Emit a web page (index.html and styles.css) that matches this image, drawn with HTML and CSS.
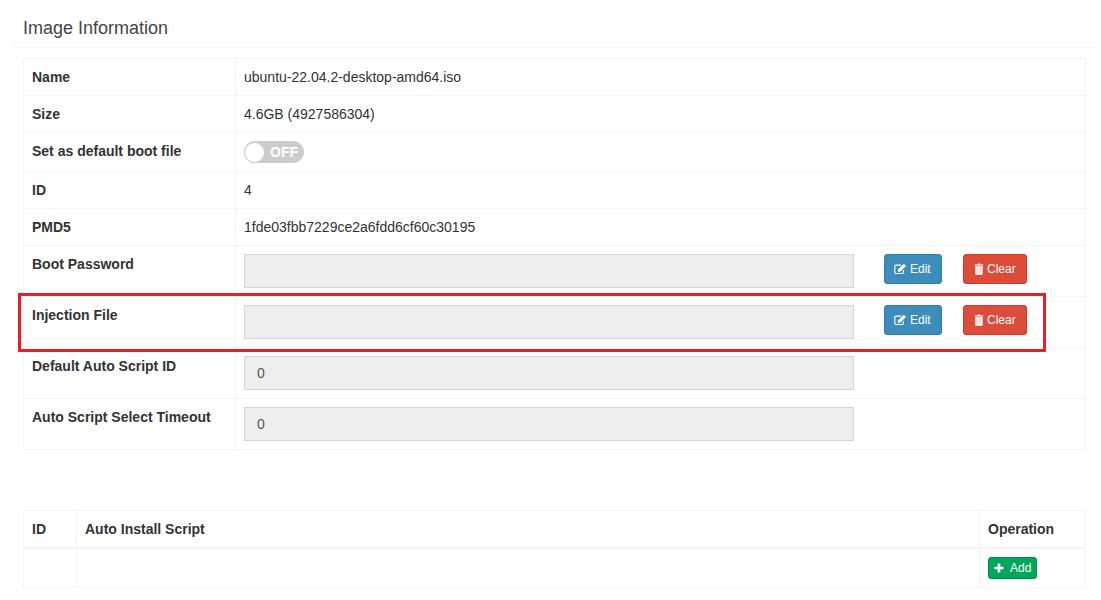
FILE: index.html
```html
<!DOCTYPE html>
<html lang="en">
<head>
<meta charset="utf-8">
<title>Image Information</title>
<link rel="stylesheet" href="styles.css">
</head>
<body>
<div class="box">
  <div class="box-header"><h3 class="box-title">Image Information</h3></div>
  <div class="box-body">
    <table class="table info">
      <colgroup><col class="c-label"><col></colgroup>
      <tbody>
        <tr><th>Name</th><td>ubuntu-22.04.2-desktop-amd64.iso</td></tr>
        <tr><th>Size</th><td>4.6GB (4927586304)</td></tr>
        <tr class="toggle-row"><th>Set as default boot file</th><td><span class="switch"><span class="knob"></span><span class="switch-text">OFF</span></span></td></tr>
        <tr><th>ID</th><td>4</td></tr>
        <tr><th>PMD5</th><td>1fde03fbb7229ce2a6fdd6cf60c30195</td></tr>
        <tr class="field-row"><th>Boot Password</th><td><div class="field-line"><input class="field" type="text" disabled>
          <button class="btn blue" type="button"><svg class="ico" viewBox="0 0 16 14"><path d="M11.5 8.2V11a1.6 1.6 0 0 1-1.6 1.6H2.6A1.6 1.6 0 0 1 1 11V3.8a1.6 1.6 0 0 1 1.6-1.6h6.2" fill="none" stroke="currentColor" stroke-width="1.4"/><path d="M5.2 7.4 12.2.6l2.6 2.6-7 6.9-3 .5z" fill="currentColor"/></svg>Edit</button>
          <button class="btn red" type="button"><svg class="ico trash" viewBox="0 0 12 14"><path d="M4 1.6 4.7.4h2.6L8 1.6h3.3v1.2H.7V1.6zM1.5 3.6h9v9.1c0 .7-.5 1.2-1.1 1.2H2.6c-.6 0-1.1-.5-1.1-1.2z" fill="currentColor"/><path d="M3.7 5v7M6 5v7M8.3 5v7" stroke="#eea59c" stroke-width=".8"/></svg>Clear</button></div></td></tr>
        <tr class="field-row"><th>Injection File</th><td><div class="field-line"><input class="field" type="text" disabled>
          <button class="btn blue" type="button"><svg class="ico" viewBox="0 0 16 14"><path d="M11.5 8.2V11a1.6 1.6 0 0 1-1.6 1.6H2.6A1.6 1.6 0 0 1 1 11V3.8a1.6 1.6 0 0 1 1.6-1.6h6.2" fill="none" stroke="currentColor" stroke-width="1.4"/><path d="M5.2 7.4 12.2.6l2.6 2.6-7 6.9-3 .5z" fill="currentColor"/></svg>Edit</button>
          <button class="btn red" type="button"><svg class="ico trash" viewBox="0 0 12 14"><path d="M4 1.6 4.7.4h2.6L8 1.6h3.3v1.2H.7V1.6zM1.5 3.6h9v9.1c0 .7-.5 1.2-1.1 1.2H2.6c-.6 0-1.1-.5-1.1-1.2z" fill="currentColor"/><path d="M3.7 5v7M6 5v7M8.3 5v7" stroke="#eea59c" stroke-width=".8"/></svg>Clear</button></div></td></tr>
        <tr class="field-row"><th>Default Auto Script ID</th><td><input class="field" type="text" value="0" disabled></td></tr>
        <tr class="field-row"><th>Auto Script Select Timeout</th><td><input class="field" type="text" value="0" disabled></td></tr>
      </tbody>
    </table>
    <table class="table scripts">
      <colgroup><col class="c-id"><col><col class="c-op"></colgroup>
      <thead><tr><th>ID</th><th>Auto Install Script</th><th>Operation</th></tr></thead>
      <tbody><tr><td></td><td></td><td><button class="btn green" type="button"><svg class="ico plus" viewBox="0 0 12 12"><path d="M4.4.6h3.2v3.8h3.8v3.2H7.6v3.8H4.4V7.6H.6V4.4h3.8z" fill="currentColor"/></svg>Add</button></td></tr></tbody>
    </table>
  </div>
</div>
<div class="highlight"></div>
</body>
</html>
```
FILE: styles.css
```css
* { box-sizing: border-box; }
html, body { margin: 0; padding: 0; background: #fff; }
body {
  height: 600px;
  overflow: hidden;
  position: relative;
  font-family: "Liberation Sans", Arial, sans-serif;
  font-size: 14px;
  line-height: 20px;
  color: #333;
}
.box { margin: 0 5px 0 13px; }
.box-header {
  height: 48px;
  padding: 18px 10px 0;
  border-bottom: 1px solid #f4f4f4;
}
.box-title { margin: 0; font-size: 18px; font-weight: 400; line-height: 20px; color: #444; }
.box-body { padding: 10px 10px 0; }
.table { width: 1063px; border-collapse: collapse; table-layout: fixed; }
.table th, .table td {
  border: 1px solid #f4f4f4;
  padding: 8px;
  text-align: left;
  vertical-align: top;
  height: 37px;
}
.table th { font-weight: 700; }
.c-label { width: 212px; }
.c-id { width: 53px; }
.c-op { width: 106px; }
.info tr.toggle-row th, .info tr.toggle-row td { height: 39px; }
.info tr.field-row th, .info tr.field-row td { height: 51px; }
.field-line { display: flex; align-items: flex-start; }
.field {
  display: block;
  width: 610px;
  height: 34px;
  padding: 6px 12px;
  border: 1px solid #d2d6de;
  background: #eee;
  color: #555;
  font: inherit;
  margin: 0;
  border-radius: 0;
}
.btn {
  display: inline-flex;
  align-items: center;
  justify-content: flex-start;
  border: 1px solid transparent;
  border-radius: 3px;
  color: #fff;
  font: 12px/18px "Liberation Sans", Arial, sans-serif;
  padding: 0;
  margin: 0;
}
.blue { width: 58px; height: 30px; margin-left: 30px; padding-left: 9px; background: #3c8dbc; border-color: #367fa9; }
.red { width: 64px; height: 30px; margin-left: 21px; padding-left: 10px; background: #dd4b39; border-color: #d73925; }
.green { width: 49px; height: 22px; padding-left: 5px; background: #00a65a; border-color: #008d4c; }
.ico { width: 13px; height: 12px; margin-right: 3px; }
.trash { width: 10px; height: 12px; margin-right: 3px; }
.plus { width: 10px; height: 10px; margin-right: 6px; }
.switch {
  display: flex;
  align-items: center;
  width: 60px;
  height: 22px;
  border-radius: 11px;
  background: #ccc;
  margin-top: 0;
}
.knob {
  width: 21px;
  height: 21px;
  border-radius: 50%;
  background: #fff;
  border: 1px solid #ccc;
}
.switch-text { margin-left: 5px; color: #fff; font-weight: 700; font-size: 14px; }
.info { margin-bottom: 60px; }
.scripts thead th { border-bottom-width: 2px; }
.highlight {
  position: absolute;
  left: 18px;
  top: 293px;
  width: 1028px;
  height: 59px;
  border: 3px solid #ed1c24;
}
```
